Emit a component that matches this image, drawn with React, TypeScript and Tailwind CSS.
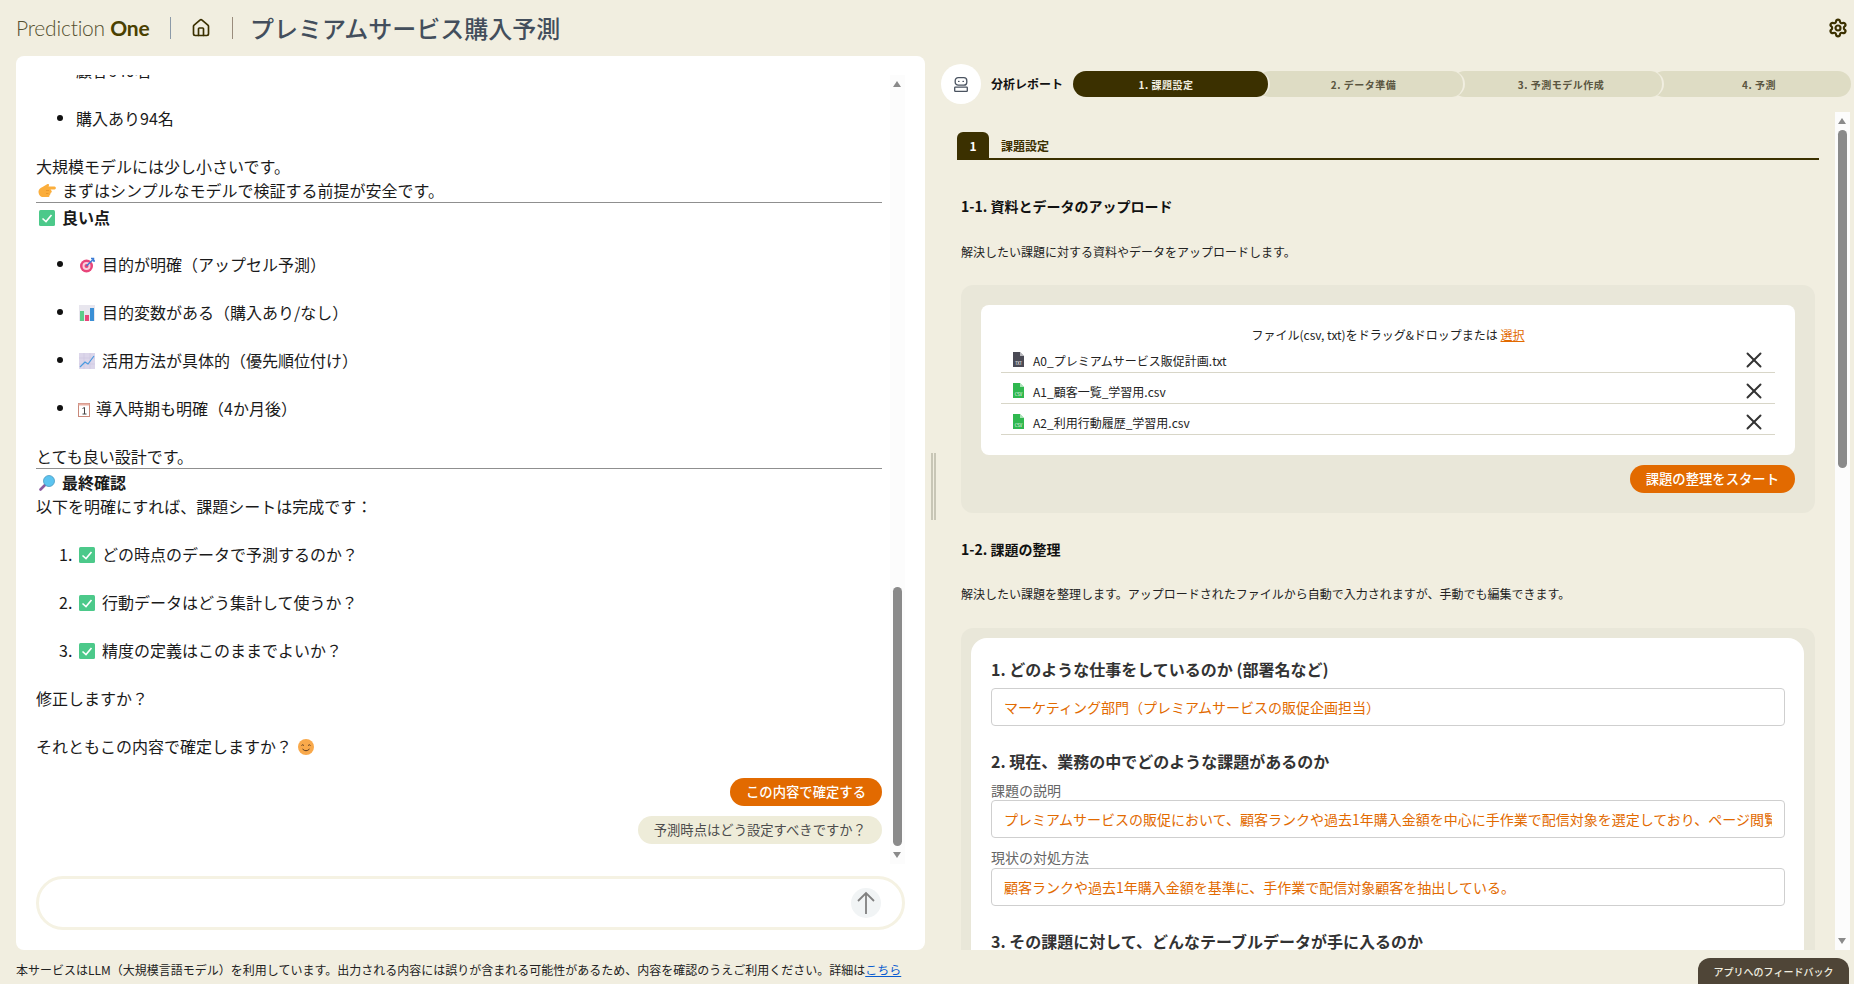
import { House, Settings, X } from 'lucide-react';
import type { ReactNode } from 'react';

const Check = () => (
  <svg viewBox="0 0 16 16" className="h-4 w-4">
    <rect width="16" height="16" rx="1.5" fill="#4cc98a" />
    <path d="M3.5 8.5 7 11.5 12.5 5" fill="none" stroke="#fff" strokeWidth="1.6" />
  </svg>
);

const Hand = () => (
  <svg viewBox="0 0 18 16" className="h-4 w-[18px]">
    <path d="M0.5 8.5c0-2.5 2-3.5 4-4.5l5-3c1.5-.5 2 1 1 2.5h6c1.8 0 1.8 3 0 3h-4l1 1.2c.8 1-.2 2-1 2.2.3 1.2-.4 2-1 2.2.2 1-.5 2-1.5 2H5c-3 0-4.5-3-4.5-5.6z" fill="#fbae3c" />
    <path d="M8 7.5h3M8 10.5h2.5" stroke="#e08a20" strokeWidth="0.6" />
  </svg>
);

const Target = () => (
  <svg viewBox="0 0 16 16" className="h-4 w-4">
    <circle cx="7.5" cy="9" r="6.5" fill="#e8457a" />
    <circle cx="7.5" cy="9" r="4" fill="#f9d0dc" />
    <circle cx="7.5" cy="9" r="2" fill="#e8457a" />
    <path d="M7.5 9 14 2.5" stroke="#3a7bd5" strokeWidth="1.5" />
    <path d="M12 1.5h2.5v2.5H16" stroke="#3a7bd5" strokeWidth="1.5" fill="none" />
  </svg>
);

const BarChart = () => (
  <svg viewBox="0 0 16 16" className="h-4 w-4">
    <rect width="16" height="16" fill="#e8e6ee" />
    <rect x="1" y="6" width="4" height="10" fill="#5ccb8a" />
    <rect x="6" y="10" width="4" height="6" fill="#e8457a" />
    <rect x="11" y="3" width="4" height="13" fill="#3a8fd5" />
  </svg>
);

const LineChart = () => (
  <svg viewBox="0 0 16 16" className="h-4 w-4">
    <rect width="16" height="16" fill="#dcd6ea" />
    <path d="M5 0v16M11 0v16M0 5h16M0 11h16" stroke="#c8c0dc" strokeWidth="0.5" />
    <path d="M1 14 6 9l3 2 6-8" fill="none" stroke="#4a9be0" strokeWidth="1.2" />
  </svg>
);

const Calendar = () => (
  <svg viewBox="0 0 12 14" className="h-[14px] w-3">
    <rect x="0.5" y="0.5" width="11" height="13" fill="#fff" stroke="#c9897a" />
    <rect x="0.5" y="0.5" width="11" height="2" fill="#e8b0a4" />
    <path d="M4.5 5.5 6.5 4.5V11M4.5 11h4" fill="none" stroke="#444" strokeWidth="1" />
  </svg>
);

const Magnifier = () => (
  <svg viewBox="0 0 16 16" className="h-4 w-4">
    <path d="M6 10 1.5 14.5" stroke="#8a5a9e" strokeWidth="2.6" strokeLinecap="round" />
    <circle cx="10" cy="6" r="5.5" fill="#5cc4f0" stroke="#4a9bc0" strokeWidth="0.8" />
  </svg>
);

const Smile = () => (
  <svg viewBox="0 0 16 16" className="h-4 w-4">
    <circle cx="8" cy="8" r="8" fill="#f9a94b" />
    <path d="M3.5 6.5q1.2-1.5 2.4 0M10.1 6.5q1.2-1.5 2.4 0M4.5 10q3.5 3.5 7 0" fill="none" stroke="#5a3a20" strokeWidth="1" />
  </svg>
);

const Emoji = ({ children, w = 'w-[22px]' }: { children: ReactNode; w?: string }) => (
  <span className={`mr-1 inline-flex justify-center align-[-2px] ${w}`}>{children}</span>
);

function ListRow({ marker, children }: { marker?: string; children: ReactNode }) {
  return (
    <li className="relative mb-6 h-6 pl-10">
      {marker ? (
        <span className="absolute left-[23px] top-0">{marker}</span>
      ) : (
        <span className="absolute left-[21px] top-[9px] h-[6px] w-[6px] rounded-full bg-[#111]" />
      )}
      {children}
    </li>
  );
}

function Scrollbar({ thumbTop, thumbHeight }: { thumbTop: string; thumbHeight: string }) {
  return (
    <div className="relative w-[15px] shrink-0 bg-[#fcfcfc]">
      <div className="absolute left-[3px] top-[6px] h-0 w-0 border-x-[4.5px] border-b-[6px] border-x-transparent border-b-[#8a8a8a]" />
      <div className={`absolute left-[3px] w-[9px] rounded-full bg-[#8a8a8a] ${thumbTop} ${thumbHeight}`} />
      <div className="absolute bottom-[6px] left-[3px] h-0 w-0 border-x-[4.5px] border-t-[6px] border-x-transparent border-t-[#8a8a8a]" />
    </div>
  );
}

function ChatPanel() {
  return (
    <div className="flex h-full flex-col rounded-lg bg-white pb-5 pl-5 pr-5 pt-[19px]">
      <div className="flex min-h-0 flex-1 gap-2">
        <div className="min-h-0 flex-1 overflow-hidden text-base leading-6 text-[#1a1a1a]">
          <ul className="-mt-[17px]">
            <ListRow>顧客640名</ListRow>
            <ListRow>購入あり94名</ListRow>
          </ul>
          <p>大規模モデルには少し小さいです。</p>
          <p className="h-[25px]">
            <Emoji>
              <Hand />
            </Emoji>
            まずはシンプルなモデルで検証する前提が安全です。
          </p>
          <div className="-mt-px mb-[2px] h-px bg-[#8f8f8f]" />
          <p className="mb-[23px] font-bold">
            <Emoji>
              <Check />
            </Emoji>
            良い点
          </p>
          <ul>
            <ListRow>
              <Emoji><Target /></Emoji>
              目的が明確（アップセル予測）
            </ListRow>
            <ListRow>
              <Emoji><BarChart /></Emoji>
              目的変数がある（購入あり/なし）
            </ListRow>
            <ListRow>
              <Emoji><LineChart /></Emoji>
              活用方法が具体的（優先順位付け）
            </ListRow>
            <ListRow>
              <Emoji w="w-4"><Calendar /></Emoji>
              導入時期も明確（4か月後）
            </ListRow>
          </ul>
          <p>とても良い設計です。</p>
          <div className="mb-px h-px bg-[#8f8f8f]" />
          <p className="font-bold">
            <Emoji>
              <Magnifier />
            </Emoji>
            最終確認
          </p>
          <p className="mb-6">以下を明確にすれば、課題シートは完成です：</p>
          <ol>
            <ListRow marker="1.">
              <Emoji><Check /></Emoji>
              どの時点のデータで予測するのか？
            </ListRow>
            <ListRow marker="2.">
              <Emoji><Check /></Emoji>
              行動データはどう集計して使うか？
            </ListRow>
            <ListRow marker="3.">
              <Emoji><Check /></Emoji>
              精度の定義はこのままでよいか？
            </ListRow>
          </ol>
          <p className="mb-6">修正しますか？</p>
          <p>
            それともこの内容で確定しますか？
            <span className="ml-[6px] inline-flex align-[-2px]">
              <Smile />
            </span>
          </p>
          <div className="mt-5 flex flex-col items-end gap-[10px]">
            <button className="h-7 rounded-full bg-[#e26a00] px-4 text-[13.33px] font-medium text-white">この内容で確定する</button>
            <button className="h-7 rounded-full bg-[#eeecd9] px-4 text-[13.33px] text-[#4d4d4d]">予測時点はどう設定すべきですか？</button>
          </div>
        </div>
        <Scrollbar thumbTop="top-[512px]" thumbHeight="h-[259px]" />
      </div>
      <div className="mt-3 flex h-[54px] items-center justify-end rounded-full border-[3px] border-[#f5f2e3] bg-white pr-[21px]">
        <button className="flex h-[30px] w-[30px] items-center justify-center rounded-full bg-[#f1f4f5]">
          <svg viewBox="0 0 20 24" className="h-6 w-5" fill="none" stroke="#808080" strokeWidth="1.8">
            <path d="M10 23V2M2 10l8-8 8 8" />
          </svg>
        </button>
      </div>
    </div>
  );
}

function FileIcon({ color, label }: { color: string; label: string }) {
  return (
    <svg viewBox="0 0 11 15" className="h-[15px] w-[11px] shrink-0">
      <path d="M0 0h7l4 4v11H0z" fill={color} />
      <path d="M7 0v4h4" fill="#fff" fillOpacity="0.6" />
      <text x="5.5" y="12.5" fontSize="4.2" textAnchor="middle" fill="#fff">
        {label}
      </text>
    </svg>
  );
}

const files = [
  { name: 'A0_プレミアムサービス販促計画.txt', color: '#4a4a55', label: 'TXT' },
  { name: 'A1_顧客一覧_学習用.csv', color: '#2fb84f', label: 'CSV' },
  { name: 'A2_利用行動履歴_学習用.csv', color: '#2fb84f', label: 'CSV' },
];

const steps = [
  { label: '1. 課題設定', box: 'z-40 w-[197px] bg-[#3b3000] pr-[9px] text-[#f0eee0] border-r-2' },
  { label: '2. データ準備', box: 'z-30 -ml-[13px] w-[208px] bg-[#dedcc4] pl-[7px] text-[#5a5540] border-r-2' },
  { label: '3. 予測モデル作成', box: 'z-20 -ml-[13px] w-[212px] bg-[#dedcc4] pl-2 text-[#5a5540] border-r-2' },
  { label: '4. 予測', box: 'z-10 -ml-[13px] flex-1 bg-[#dedcc4] pl-4 text-[#5a5540]' },
];

function Stepper() {
  return (
    <div className="flex h-[26px] flex-1">
      {steps.map((step) => (
        <div
          key={step.label}
          className={`flex items-center justify-center rounded-full border-[#f1eee0] text-[10px] font-bold tracking-[0.5px] ${step.box}`}
        >
          {step.label}
        </div>
      ))}
    </div>
  );
}

function TextField({ value }: { value: string }) {
  return (
    <input
      readOnly
      value={value}
      className="block h-[38px] w-full rounded border border-[#cfcfcf] bg-white px-3 text-sm text-[#e26a00] outline-none"
    />
  );
}

function ReportPanel() {
  return (
    <div className="min-h-0 flex-1 overflow-hidden pl-4 pr-4">
      <div className="mt-5 flex h-7 border-b-2 border-[#3b3000]">
        <div className="flex h-[26px] w-8 items-center justify-center rounded-t-md bg-[#3b3000] pt-[2px] text-xs font-bold text-white">1</div>
        <div className="ml-3 flex h-[26px] items-center pt-[2px] text-xs font-bold text-[#3b3000]">課題設定</div>
      </div>
      <div className="pl-1 pr-1">
        <h2 className="mt-[37px] -translate-y-px text-sm font-bold leading-5 text-[#111]">1-1. 資料とデータのアップロード</h2>
        <p className="mt-[25px] text-xs leading-5 text-[#222]">解決したい課題に対する資料やデータをアップロードします。</p>
        <div className="mt-[23px] rounded-xl bg-[#e9e7d9] px-5 pb-5 pt-5">
          <div className="rounded-lg bg-white px-5 pb-5 pt-[23px]">
            <p className="text-center text-xs leading-[14px] text-[#222]">
              ファイル(csv, txt)をドラッグ&ドロップまたは <span className="text-[#e26a00] underline">選択</span>
            </p>
            {files.map((f) => (
              <div key={f.name} className="flex h-[31px] items-center border-b border-[#d8d6c8] pl-3 pr-[14px] pt-[5px]">
                <FileIcon color={f.color} label={f.label} />
                <span className="ml-[9px] mt-[3px] flex-1 text-xs text-[#222]">{f.name}</span>
                <X size={26} strokeWidth={1.8} className="-my-2 -mr-[6px] text-[#333]" />
              </div>
            ))}
          </div>
          <div className="mt-[10px] flex justify-end">
            <button className="h-7 rounded-full bg-[#e26a00] px-4 text-[13.33px] font-medium text-white">課題の整理をスタート</button>
          </div>
        </div>
        <h2 className="mt-[27px] -translate-y-px text-sm font-bold leading-5 text-[#111]">1-2. 課題の整理</h2>
        <p className="mt-6 text-xs leading-5 text-[#222]">解決したい課題を整理します。アップロードされたファイルから自動で入力されますが、手動でも編集できます。</p>
        <div className="mt-6 rounded-xl bg-[#e9e7d9] pl-[10px] pr-[11px] pt-[10px]">
          <div className="rounded-2xl bg-white pb-6 pl-5 pr-[19px] pt-5">
            <h3 className="-translate-y-px text-base font-semibold leading-6 text-[#333]">1. どのような仕事をしているのか (部署名など)</h3>
            <div className="mt-[6px]">
              <TextField value="マーケティング部門（プレミアムサービスの販促企画担当）" />
            </div>
            <h3 className="mt-6 -translate-y-px text-base font-semibold leading-6 text-[#333]">2. 現在、業務の中でどのような課題があるのか</h3>
            <label className="mt-2 block -translate-y-px text-sm leading-[18px] text-[#666]">課題の説明</label>
            <TextField value="プレミアムサービスの販促において、顧客ランクや過去1年購入金額を中心に手作業で配信対象を選定しており、ページ閲覧履歴などの行動データを活用できていない。" />
            <label className="mb-px mt-[11px] block -translate-y-px text-sm leading-[18px] text-[#666]">現状の対処方法</label>
            <TextField value="顧客ランクや過去1年購入金額を基準に、手作業で配信対象顧客を抽出している。" />
            <h3 className="mt-6 -translate-y-px text-base font-semibold leading-6 text-[#333]">3. その課題に対して、どんなテーブルデータが手に入るのか</h3>
          </div>
        </div>
      </div>
    </div>
  );
}

export default function App() {
  return (
    <div className="relative flex h-screen w-full flex-col overflow-hidden bg-[#f1eee0] [font-family:'Noto_Sans_CJK_JP',sans-serif]">
      <header className="flex h-14 shrink-0 items-center pl-4 pr-[6px]">
        <span className="-mt-[2px] w-[154px] text-[21px] leading-none tracking-[-0.2px] [font-family:'Lato','Noto_Sans_CJK_JP',sans-serif]">
          <span className="font-light text-[#55502f]">Prediction</span> <span className="font-bold text-[#4a4000]">One</span>
        </span>
        <span className="h-[22px] w-px bg-[#8c9aa8]" />
        <House size={20} strokeWidth={2} className="ml-5 text-[#3b3000]" />
        <span className="ml-[21px] h-[22px] w-px bg-[#9a8c7c]" />
        <h1 className="ml-[17px] flex-1 text-2xl font-medium text-[#434e5c]">プレミアムサービス購入予測</h1>
        <Settings size={20} strokeWidth={2.6} className="text-[#3b3000]" />
      </header>

      <main className="flex h-[894px] shrink-0">
        <div className="ml-4 w-[909px] shrink-0">
          <ChatPanel />
        </div>
        <div className="flex w-4 shrink-0 items-center justify-center gap-px pb-[33px]">
          <div className="h-[67px] w-[2px] bg-[#c8c6b6]" />
          <div className="h-[67px] w-[2px] bg-[#c8c6b6]" />
        </div>
        <div className="flex min-w-0 flex-1 flex-col">
          <div className="flex h-14 shrink-0 items-start pr-[3px] pt-2">
            <div className="flex h-10 w-10 items-center justify-center rounded-full bg-white">
              <svg viewBox="0 0 14 15" className="h-[15px] w-[14px]" fill="none" stroke="#4a5360" strokeWidth="1.3">
                <rect x="1.2" y="0.7" width="11.6" height="7.5" rx="3" />
                <path d="M4.6 4.4h.4M9 4.4h.4" strokeLinecap="round" />
                <rect x="0.7" y="10.2" width="12.6" height="4.1" rx="0.6" />
              </svg>
            </div>
            <span className="ml-[10px] mr-[10px] mt-[13px] text-xs font-bold leading-[14px] text-[#111]">分析レポート</span>
            <div className="mt-[7px] flex flex-1">
              <Stepper />
            </div>
          </div>
          <div className="flex min-h-0 flex-1 pr-1">
            <ReportPanel />
            <Scrollbar thumbTop="top-[18px]" thumbHeight="h-[338px]" />
          </div>
        </div>
      </main>

      <footer className="pl-4 pt-[10px] text-xs leading-5 text-[#222]">
        本サービスはLLM（大規模言語モデル）を利用しています。出力される内容には誤りが含まれる可能性があるため、内容を確認のうえご利用ください。詳細は
        <span className="text-[#0a5ccf] underline">こちら</span>
      </footer>
      <div className="absolute bottom-0 right-[5px] flex h-[26px] w-[151px] items-center justify-center rounded-t-xl bg-[#4f4537] text-[10px] font-medium text-[#f0eee0]">
        アプリへのフィードバック
      </div>
    </div>
  );
}
